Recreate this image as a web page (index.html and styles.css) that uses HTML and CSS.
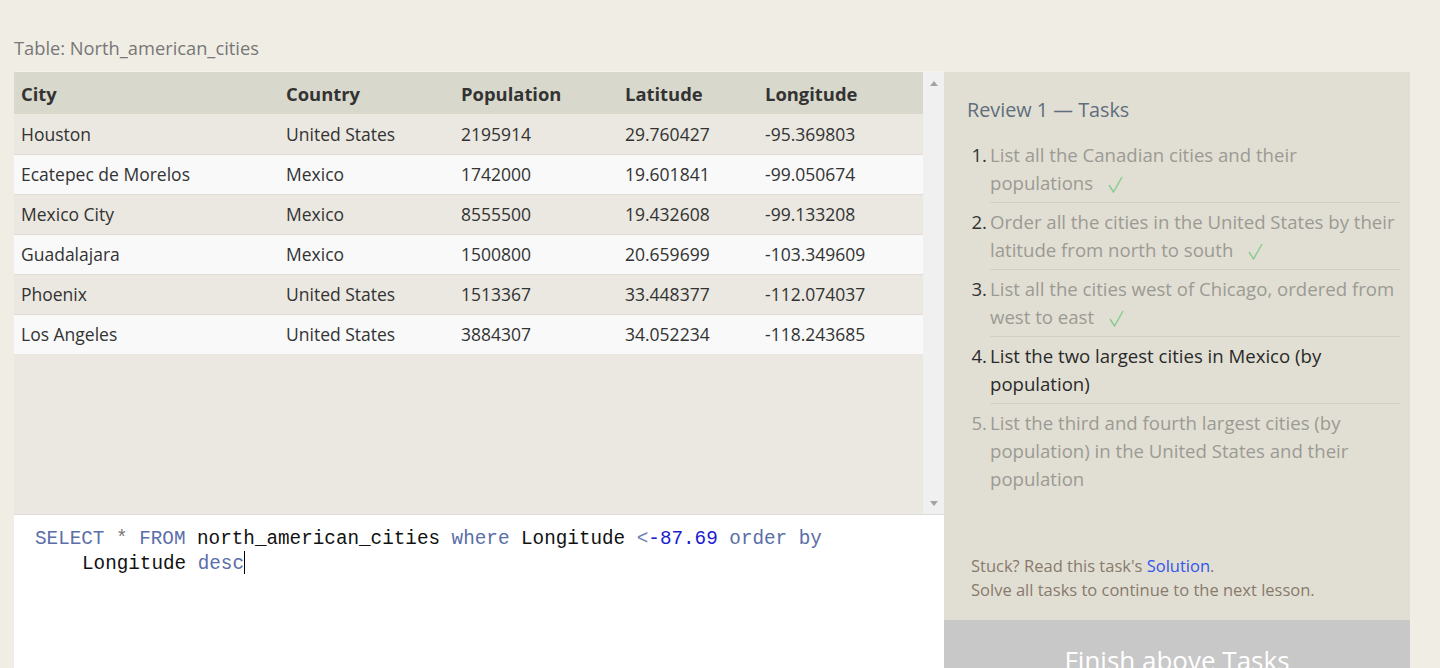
FILE: index.html
```html
<!DOCTYPE html>
<html>
<head>
<meta charset="utf-8">
<link rel="stylesheet" href="styles.css">
</head>
<body>
<div class="page">
  <div class="table-title">Table: North_american_cities</div>
  <div class="main">
    <div class="left">
      <div class="table-wrap">
        <div class="table-area">
          <table class="cities">
            <colgroup>
              <col class="c1"><col class="c2"><col class="c3"><col class="c4"><col class="c5">
            </colgroup>
            <thead>
              <tr><th>City</th><th>Country</th><th>Population</th><th>Latitude</th><th>Longitude</th></tr>
            </thead>
            <tbody>
              <tr><td>Houston</td><td>United States</td><td>2195914</td><td>29.760427</td><td>-95.369803</td></tr>
              <tr><td>Ecatepec de Morelos</td><td>Mexico</td><td>1742000</td><td>19.601841</td><td>-99.050674</td></tr>
              <tr><td>Mexico City</td><td>Mexico</td><td>8555500</td><td>19.432608</td><td>-99.133208</td></tr>
              <tr><td>Guadalajara</td><td>Mexico</td><td>1500800</td><td>20.659699</td><td>-103.349609</td></tr>
              <tr><td>Phoenix</td><td>United States</td><td>1513367</td><td>33.448377</td><td>-112.074037</td></tr>
              <tr><td>Los Angeles</td><td>United States</td><td>3884307</td><td>34.052234</td><td>-118.243685</td></tr>
            </tbody>
          </table>
        </div>
        <div class="scrollbar">
          <span class="arrow-up"></span>
          <span class="arrow-down"></span>
        </div>
      </div>
      <div class="editor">
        <div class="code-line"><span class="kw">SELECT</span> <span class="op">*</span> <span class="kw">FROM</span> north_american_cities <span class="kw">where</span> Longitude <span class="op2">&lt;</span><span class="num">-87.69</span> <span class="kw">order by</span></div>
        <div class="code-line wrapped">Longitude <span class="kw">desc</span><span class="cursor"></span></div>
      </div>
    </div>
    <div class="right">
      <div class="panel">
        <div class="panel-title">Review 1 — Tasks</div>
        <ol class="tasks">
          <li class="task done"><span class="n">1.</span><span class="t">List all the Canadian cities and their populations<svg class="check" width="15" height="17" viewBox="0 0 15 17"><path d="M1 9 L5.5 16 L14 1" fill="none" stroke="#86cc8e" stroke-width="1.4"/></svg></span></li>
          <li class="task done"><span class="n">2.</span><span class="t">Order all the cities in the United States by their latitude from north to south<svg class="check" width="15" height="17" viewBox="0 0 15 17"><path d="M1 9 L5.5 16 L14 1" fill="none" stroke="#86cc8e" stroke-width="1.4"/></svg></span></li>
          <li class="task done"><span class="n">3.</span><span class="t">List all the cities west of Chicago, ordered from west to east<svg class="check" width="15" height="17" viewBox="0 0 15 17"><path d="M1 9 L5.5 16 L14 1" fill="none" stroke="#86cc8e" stroke-width="1.4"/></svg></span></li>
          <li class="task current"><span class="n">4.</span><span class="t">List the two largest cities in Mexico (by population)</span></li>
          <li class="task future last"><span class="n">5.</span><span class="t">List the third and fourth largest cities (by population) in the United States and their population</span></li>
        </ol>
        <div class="stuck">
          <div>Stuck? Read this task's <a class="solution">Solution</a>.</div>
          <div>Solve all tasks to continue to the next lesson.</div>
        </div>
      </div>
      <div class="finish">Finish above Tasks</div>
    </div>
  </div>
</div>
</body>
</html>
```
FILE: styles.css
```css
* { box-sizing: border-box; }
html, body { margin: 0; padding: 0; }
body {
  background: #f0ede4;
  font-family: "Open Sans", "Noto Sans", sans-serif;
  color: #333;
  overflow: hidden;
  height: 668px;
}
.page { padding: 36px 0 0 14px; }
.table-title {
  font-size: 18.3px;
  line-height: 24px;
  color: #777;
  margin-bottom: 11px;
}
.main { display: flex; align-items: flex-start; }
.left { width: 930px; display: flex; flex-direction: column; }
.table-wrap {
  height: 444px;
  display: flex;
  background: #eae8e0;
  border-top: 1px solid #f4f3ef;
  border-bottom: 1px solid #dedcd6;
}
.table-area { flex: 1; }
.cities {
  width: 100%;
  border-collapse: collapse;
  font-size: 17.5px;
}
.c1 { width: 265px; }
.c2 { width: 175px; }
.c3 { width: 164px; }
.c4 { width: 140px; }
.cities th {
  background: #d9d8cc;
  text-align: left;
  font-weight: 700;
  height: 42px;
  padding: 0 7px;
  font-size: 18.4px;
  color: #333;
}
.cities td {
  height: 40px;
  padding: 0 7px;
  border-top: 1px solid #dedcd5;
  color: #333;
}
.cities tbody tr:first-child td { border-top: none; }
.cities tbody tr:nth-child(odd) td { background: #eae8e0; }
.cities tbody tr:nth-child(even) td { background: #f9f9f9; }
.scrollbar {
  width: 21px;
  background: #f0f0f0;
  display: flex;
  flex-direction: column;
  justify-content: space-between;
  align-items: center;
  padding: 9px 0 8px;
}
.arrow-up, .arrow-down {
  width: 0; height: 0;
  border-left: 4.5px solid transparent;
  border-right: 4.5px solid transparent;
}
.arrow-up { border-bottom: 5px solid #a3a3a3; }
.arrow-down { border-top: 5px solid #a3a3a3; }
.editor {
  background: #fff;
  height: 200px;
  padding: 12px 21px 0 21px;
  font-family: "Liberation Mono", monospace;
  font-size: 19.3px;
  line-height: 24px;
  color: #111;
}
.code-line { white-space: pre; }
.code-line.wrapped { padding-left: 47px; }
.kw { color: #5a6ea8; }
.op { color: #777; }
.op2 { color: #7080b8; }
.num { color: #1c1ccf; }
.cursor {
  display: inline-block;
  width: 0;
  height: 23px;
  border-left: 1.5px solid #000;
  vertical-align: -5px;
}
.right { width: 466px; display: flex; flex-direction: column; padding-top: 1px; }
.panel {
  background: #e1dfd3;
  height: 548px;
  padding: 24px 10px 18px 23px;
  display: flex;
  flex-direction: column;
}
.panel-title {
  font-size: 19.8px;
  line-height: 28px;
  color: #5f6d7d;
  margin-bottom: 12px;
}
.tasks { list-style: none; margin: 0; padding: 0; }
.task { display: flex; font-size: 18.6px; line-height: 28px; }
.task .n {
  text-align: right;
  padding: 5px 3px 5px 0;
  width: 23px;
  flex: none;
}
.task .t {
  flex: 1;
  padding: 5px 0;
  border-bottom: 1px solid #d2d0c6;
}
.task.last .t { border-bottom: none; }
.task.done .n { color: #333; }
.task.done .t { color: #9c9a94; }
.task.current .n, .task.current .t { color: #2a2a2a; }
.task.future .n, .task.future .t { color: #9c9a94; }
.check { margin-left: 15px; vertical-align: -3px; }
.stuck {
  margin-top: auto;
  padding-left: 4px;
  font-size: 16.5px;
  line-height: 24px;
  color: #887a6c;
}
.solution { color: #3355ee; }
.finish {
  background: #c8c8c8;
  color: #fff;
  height: 100px;
  text-align: center;
  font-size: 26px;
  line-height: 32px;
  padding-top: 24px;
}
```
